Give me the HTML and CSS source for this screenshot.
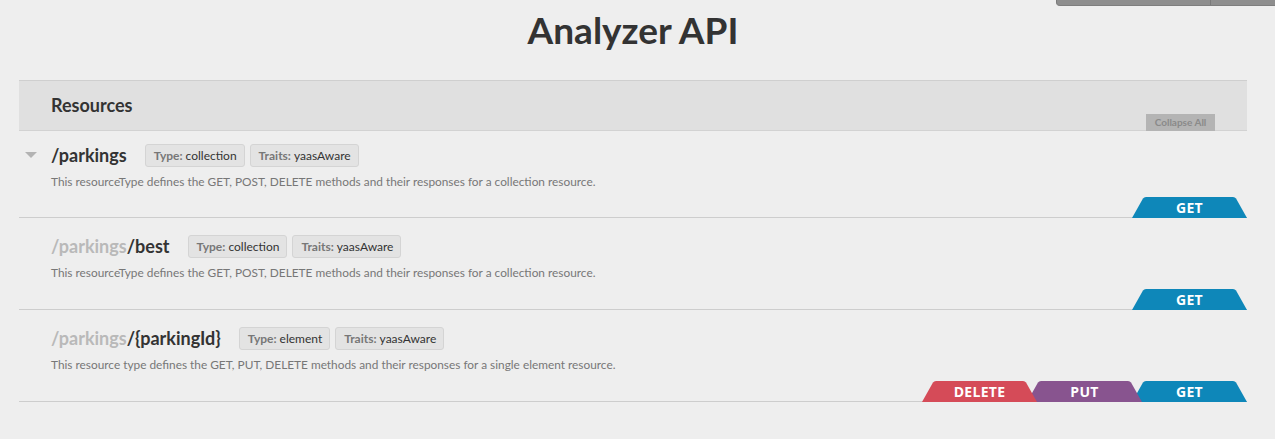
FILE: index.html
```html
<!DOCTYPE html>
<html>
<head>
<meta charset="utf-8">
<link rel="stylesheet" href="styles.css">
</head>
<body>
<div class="topbar"><span class="topbar-a"></span><span class="topbar-b"></span></div>
<div class="page">
  <h1 class="api-title">Analyzer API</h1>
  <div class="resources-head">
    <h2 class="resources-title">Resources</h2>
    <button class="collapse-btn">Collapse All</button>
  </div>

  <div class="resource first">
    <div class="gutter"><span class="toggle"></span></div>
    <div class="res-head">
      <span class="res-path">/parkings</span>
      <span class="tag"><b>Type:</b> collection</span>
      <span class="tag"><b>Traits:</b> yaasAware</span>
    </div>
    <p class="res-desc">This resourceType defines the GET, POST, DELETE methods and their responses for a collection resource.</p>
    <div class="tabs"><span class="tab get">GET</span></div>
  </div>

  <div class="resource">
    <div class="gutter"></div>
    <div class="res-head">
      <span class="res-path"><span class="parent">/parkings</span>/best</span>
      <span class="tag"><b>Type:</b> collection</span>
      <span class="tag"><b>Traits:</b> yaasAware</span>
    </div>
    <p class="res-desc">This resourceType defines the GET, POST, DELETE methods and their responses for a collection resource.</p>
    <div class="tabs"><span class="tab get">GET</span></div>
  </div>

  <div class="resource">
    <div class="gutter"></div>
    <div class="res-head">
      <span class="res-path"><span class="parent">/parkings</span>/{parkingId}</span>
      <span class="tag"><b>Type:</b> element</span>
      <span class="tag"><b>Traits:</b> yaasAware</span>
    </div>
    <p class="res-desc">This resource type defines the GET, PUT, DELETE methods and their responses for a single element resource.</p>
    <div class="tabs">
      <span class="tab delete">DELETE</span>
      <span class="tab put">PUT</span>
      <span class="tab get">GET</span>
    </div>
  </div>
</div>
</body>
</html>
```

FILE: styles.css
```css
* { box-sizing: border-box; }
html, body {
  margin: 0;
  padding: 0;
  background: #eeeeee;
  font-family: Lato, "Open Sans", Arial, sans-serif;
  color: #333;
}
.topbar {
  position: absolute;
  top: 0;
  right: 0;
  width: 219px;
  height: 6px;
  display: flex;
  background: #8e8e8e;
  border-bottom-left-radius: 4px;
  border-left: 1px solid #7a7a7a;
  border-bottom: 1px solid #7e7e7e;
}
.topbar-a { width: 154px; border-right: 1px solid #7a7a7a; }
.topbar-b { flex: 1; }

.page {
  padding: 0 28px 0 19px;
}
.api-title {
  margin: 7px 0 0 0;
  font-size: 37px;
  line-height: 46px;
  font-weight: 700;
  text-align: center;
  color: #333;
}
.resources-head {
  position: relative;
  margin-top: 27px;
  height: 51px;
  background: #e0e0e0;
  border-top: 1px solid #cfcfcf;
  border-bottom: 1px solid #d2d2d2;
  padding-left: 32px;
}
.resources-title {
  margin: 0;
  font-size: 18px;
  line-height: 48px;
  font-weight: 700;
  color: #333;
}
.collapse-btn {
  position: absolute;
  right: 32px;
  bottom: -1px;
  width: 69px;
  height: 17px;
  border: 0;
  padding: 0;
  background: #b4b4b4;
  color: #8a8a8a;
  font-family: Lato, sans-serif;
  font-size: 10px;
  font-weight: 700;
  line-height: 17px;
}

.resource {
  display: grid;
  grid-template-columns: 32px 1fr;
  border-bottom: 1px solid #cdcdcd;
  padding-top: 14px;
}
.resource.first { padding-top: 10px; }
.gutter {
  grid-row: 1;
  grid-column: 1;
  display: flex;
  align-items: center;
}
.toggle {
  margin-left: 6px;
  width: 0;
  height: 0;
  border-left: 6px solid transparent;
  border-right: 6px solid transparent;
  border-top: 6px solid #b3b3b3;
}
.res-head {
  grid-row: 1;
  grid-column: 2;
  display: flex;
  align-items: center;
  gap: 5px;
  height: 28px;
}
.res-path {
  font-size: 18px;
  font-weight: 700;
  color: #333;
  margin-right: 13px;
}
.res-path .parent { color: #b9b9b9; }
.tag {
  display: inline-flex;
  align-items: center;
  height: 23px;
  padding: 0 7px 0 8px;
  background: #e3e3e3;
  border: 1px solid #d4d4d4;
  border-radius: 3px;
  font-size: 12px;
  color: #333;
}
.tag b {
  color: #777;
  font-weight: 700;
  margin-right: 3px;
}
.res-desc {
  grid-column: 2;
  margin: 5px 0 0 0;
  font-size: 11.85px;
  line-height: 16px;
  color: #777;
}
.tabs {
  grid-column: 2;
  display: flex;
  justify-content: flex-end;
  margin-top: 8px;
  height: 20px;
}
.resource.first .tabs { margin-top: 7px; }
.tab {
  position: relative;
  width: 115px;
  height: 21px;
  margin-bottom: -1px;
  margin-left: -10px;
  color: #fff;
  font-family: "Open Sans", Arial, sans-serif;
  font-weight: 700;
  font-size: 14px;
  letter-spacing: 0.3px;
  line-height: 21px;
  text-align: center;
  clip-path: path('M0 21 L11 1.5 Q12 0 14 0 L101 0 Q103 0 104 1.5 L115 21 Z');
}
.tab.get { background: #0e87b9; z-index: 1; }
.tab.put { background: #88548f; z-index: 2; }
.tab.delete { background: #d54b58; z-index: 3; }
```
